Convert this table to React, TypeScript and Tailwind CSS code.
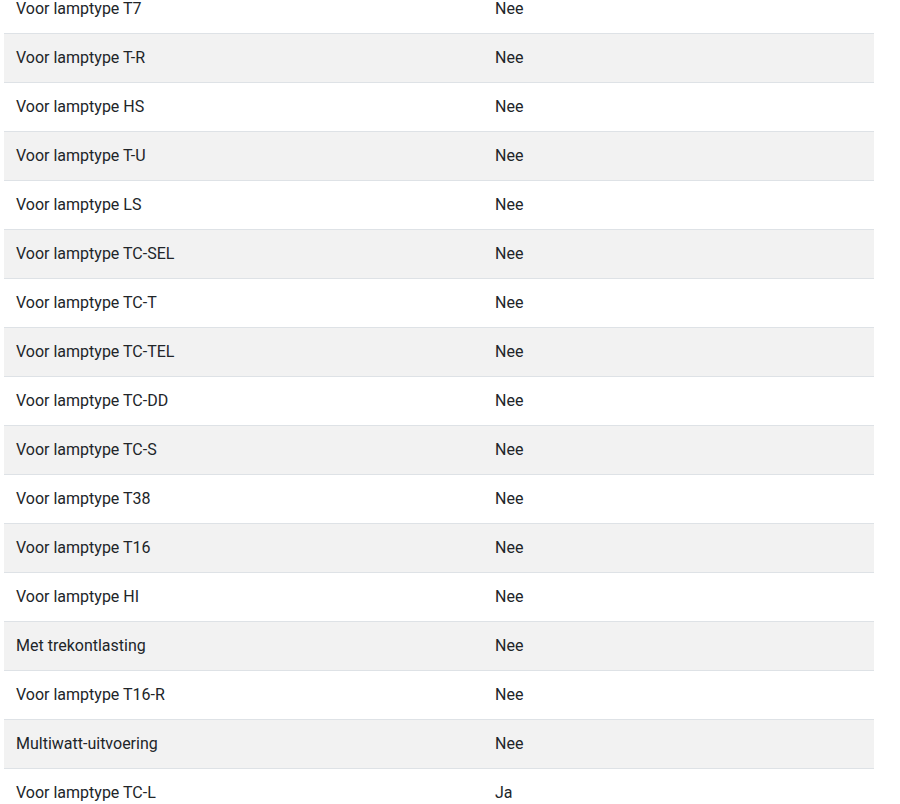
import React from 'react'

const rows: [string, string][] = [
  ['Voor lamptype T7', 'Nee'],
  ['Voor lamptype T-R', 'Nee'],
  ['Voor lamptype HS', 'Nee'],
  ['Voor lamptype T-U', 'Nee'],
  ['Voor lamptype LS', 'Nee'],
  ['Voor lamptype TC-SEL', 'Nee'],
  ['Voor lamptype TC-T', 'Nee'],
  ['Voor lamptype TC-TEL', 'Nee'],
  ['Voor lamptype TC-DD', 'Nee'],
  ['Voor lamptype TC-S', 'Nee'],
  ['Voor lamptype T38', 'Nee'],
  ['Voor lamptype T16', 'Nee'],
  ['Voor lamptype HI', 'Nee'],
  ['Met trekontlasting', 'Nee'],
  ['Voor lamptype T16-R', 'Nee'],
  ['Multiwatt-uitvoering', 'Nee'],
  ['Voor lamptype TC-L', 'Ja'],
]

export default function App() {
  return (
    <div className="h-[804px] overflow-hidden bg-white font-['Roboto',sans-serif] text-[16px] text-[#212529]">
      <div className="ml-[4px] mt-[-16px] w-[870px]">
        {rows.map(([label, value], i) => (
          <div
            key={label}
            className={`flex h-[49px] items-center border-t border-[#dee2e6] ${
              i % 2 === 1 ? 'bg-[#f2f2f2]' : 'bg-white'
            }`}
          >
            <div className="w-[479px] px-3">{label}</div>
            <div className="flex-1 px-3">{value}</div>
          </div>
        ))}
      </div>
    </div>
  )
}
